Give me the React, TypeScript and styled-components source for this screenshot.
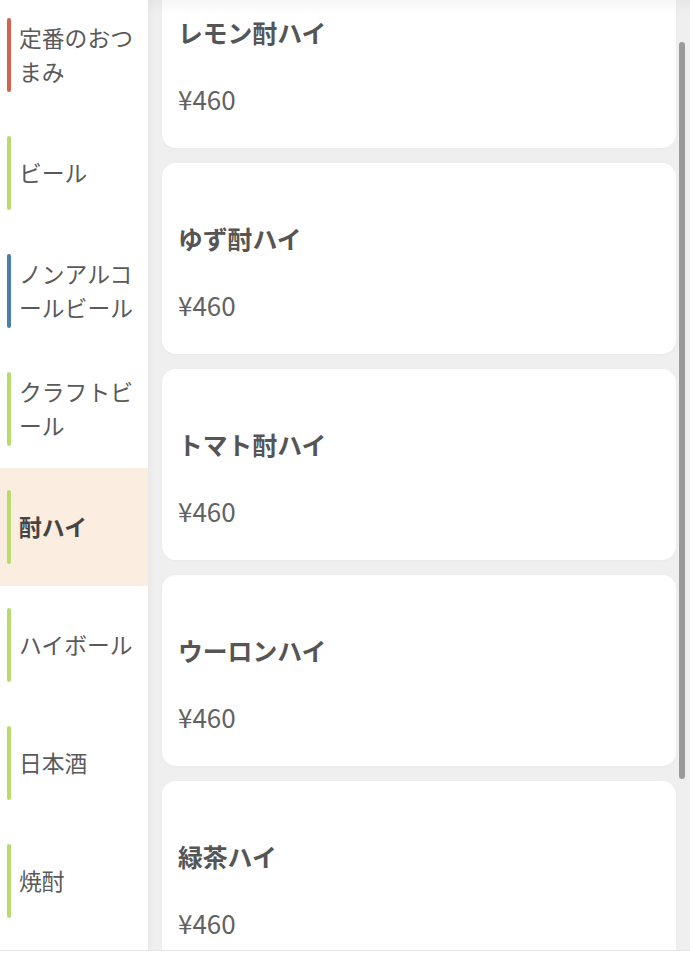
import React from "react";
import styled, { createGlobalStyle } from "styled-components";

const GlobalStyle = createGlobalStyle`
  html, body {
    margin: 0;
    padding: 0;
    background: #ffffff;
  }
  body {
    font-family: "Noto Sans CJK JP", "Noto Sans", sans-serif;
  }
`;

const AppBlock = styled.div`
  display: flex;
  width: 690px;
  height: 950px;
  overflow: hidden;
  border-bottom: 1px solid #e6e6e6;
  position: relative;
`;

const Sidebar = styled.nav`
  width: 148px;
  flex-shrink: 0;
  background: #ffffff;
  overflow: hidden;
  position: relative;
  z-index: 1;
  box-shadow: 2px 0 6px rgba(0, 0, 0, 0.04);
`;

const CategoryList = styled.ul`
  list-style: none;
  margin: -4px 0 0;
  padding: 0;
`;

interface CategoryItemProps {
  active: boolean;
  barColor: string;
}

const CategoryItem = styled.li<CategoryItemProps>`
  height: 118px;
  display: flex;
  align-items: center;
  gap: 8px;
  padding-left: 7px;
  box-sizing: border-box;
  background: ${(props) => (props.active ? "#fbeddf" : "#ffffff")};
  &::before {
    content: "";
    width: 4px;
    height: 74px;
    border-radius: 2px;
    flex-shrink: 0;
    background: ${(props) => props.barColor};
  }
`;

const CategoryLabel = styled.span<{ active: boolean }>`
  width: 119px;
  font-size: 22.8px;
  line-height: 34px;
  line-break: loose;
  word-break: break-all;
  color: ${(props) => (props.active ? "#444444" : "#5a5a5a")};
  font-weight: ${(props) => (props.active ? 700 : 400)};
`;

const Main = styled.main`
  flex: 1;
  background: #efefef;
  padding: 0 14px;
  overflow: hidden;
  position: relative;
  &::before {
    content: "";
    position: absolute;
    top: 0;
    left: 0;
    right: 0;
    height: 14px;
    background: linear-gradient(rgba(0, 0, 0, 0.035), rgba(0, 0, 0, 0));
    z-index: 2;
  }
`;

const CardList = styled.div`
  display: flex;
  flex-direction: column;
  gap: 15px;
  margin-top: -43px;
`;

const MenuCard = styled.div`
  height: 191px;
  box-sizing: border-box;
  background: #ffffff;
  border-radius: 14px;
  padding: 58px 16px 0;
  display: flex;
  flex-direction: column;
  gap: 33px;
  box-shadow: 0 1px 3px rgba(0, 0, 0, 0.03);
`;

const MenuTitle = styled.p`
  margin: 0;
  font-size: 24.8px;
  line-height: 34px;
  font-weight: 700;
  color: #555555;
`;

const MenuPrice = styled.p`
  margin: 0;
  font-size: 26px;
  line-height: 34px;
  color: #626262;
`;

const ScrollThumb = styled.div`
  position: absolute;
  right: 5px;
  top: 42px;
  width: 6px;
  height: 737px;
  border-radius: 3px;
  background: #9a9a9a;
`;

const categories = [
  { name: "定番のおつまみ", color: "#d6614f" },
  { name: "ビール", color: "#b6dc6c" },
  { name: "ノンアルコールビール", color: "#4b7eae" },
  { name: "クラフトビール", color: "#b6dc6c" },
  { name: "酎ハイ", color: "#b6dc6c" },
  { name: "ハイボール", color: "#b6dc6c" },
  { name: "日本酒", color: "#b6dc6c" },
  { name: "焼酎", color: "#b6dc6c" },
];

const menus = [
  { name: "レモン酎ハイ", price: 460 },
  { name: "ゆず酎ハイ", price: 460 },
  { name: "トマト酎ハイ", price: 460 },
  { name: "ウーロンハイ", price: 460 },
  { name: "緑茶ハイ", price: 460 },
];

const App: React.FC = () => {
  const activeCategory = "酎ハイ";
  return (
    <>
      <GlobalStyle />
      <AppBlock>
        <Sidebar>
          <CategoryList>
            {categories.map((category) => (
              <CategoryItem
                key={category.name}
                active={category.name === activeCategory}
                barColor={category.color}
              >
                <CategoryLabel active={category.name === activeCategory}>
                  {category.name}
                </CategoryLabel>
              </CategoryItem>
            ))}
          </CategoryList>
        </Sidebar>
        <Main>
          <CardList>
            {menus.map((menu) => (
              <MenuCard key={menu.name}>
                <MenuTitle>{menu.name}</MenuTitle>
                <MenuPrice>¥{menu.price}</MenuPrice>
              </MenuCard>
            ))}
          </CardList>
          <ScrollThumb />
        </Main>
      </AppBlock>
    </>
  );
};

export default App;
